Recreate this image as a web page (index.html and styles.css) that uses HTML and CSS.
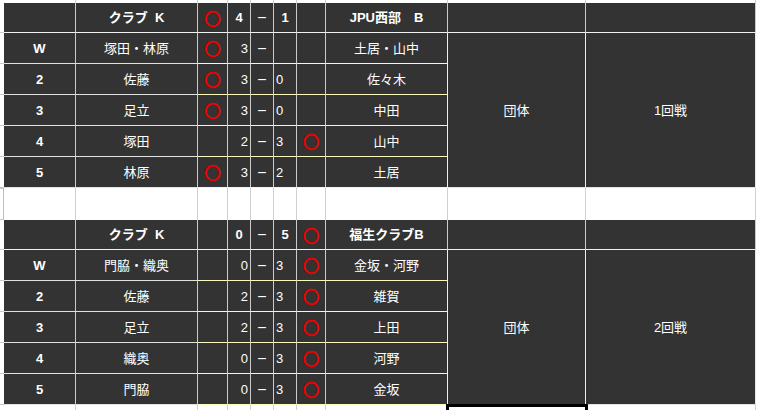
FILE: index.html
```html
<!DOCTYPE html>
<html lang="ja">
<head>
<meta charset="utf-8">
<title>試合結果</title>
<link rel="stylesheet" href="styles.css">
</head>
<body>
<div class="sheet">
  <!-- top strip -->
  <div class="edge nog"></div><div class="edge"></div><div class="edge"></div><div class="edge"></div><div class="edge"></div><div class="edge"></div><div class="edge"></div><div class="edge"></div><div class="edge"></div><div class="edge"></div><div class="edge"></div>

  <!-- match 1 header -->
  <div class="gut"></div>
  <div class="cell hb"></div>
  <div class="cell hb b">クラブ&nbsp; K</div>
  <div class="cell hb circ">○</div>
  <div class="cell hb b">4</div>
  <div class="cell hb dash">－</div>
  <div class="cell hb b">1</div>
  <div class="cell hb"></div>
  <div class="cell hb b">JPU西部　B</div>
  <div class="cell hb"></div>
  <div class="cell hb"></div>

  <!-- W -->
  <div class="gut"></div>
  <div class="cell b">W</div>
  <div class="cell">塚田・林原</div>
  <div class="cell y circ">○</div>
  <div class="cell y r">3</div>
  <div class="cell y dash">－</div>
  <div class="cell y l"></div>
  <div class="cell y"></div>
  <div class="cell y yr">土居・山中</div>
  <div class="cell yr merge">団体</div>
  <div class="cell last merge">1回戦</div>

  <div class="gut"></div>
  <div class="cell b">2</div>
  <div class="cell">佐藤</div>
  <div class="cell y circ">○</div>
  <div class="cell y r">3</div>
  <div class="cell y dash">－</div>
  <div class="cell y l">0</div>
  <div class="cell y"></div>
  <div class="cell y yr">佐々木</div>

  <div class="gut"></div>
  <div class="cell b">3</div>
  <div class="cell">足立</div>
  <div class="cell y circ">○</div>
  <div class="cell y r">3</div>
  <div class="cell y dash">－</div>
  <div class="cell y l">0</div>
  <div class="cell y"></div>
  <div class="cell y yr">中田</div>

  <div class="gut"></div>
  <div class="cell b">4</div>
  <div class="cell">塚田</div>
  <div class="cell y"></div>
  <div class="cell y r">2</div>
  <div class="cell y dash">－</div>
  <div class="cell y l">3</div>
  <div class="cell y circ">○</div>
  <div class="cell y yr">山中</div>

  <div class="gut"></div>
  <div class="cell b">5</div>
  <div class="cell">林原</div>
  <div class="cell y circ">○</div>
  <div class="cell y r">3</div>
  <div class="cell y dash">－</div>
  <div class="cell y l">2</div>
  <div class="cell y"></div>
  <div class="cell y yr">土居</div>

  <!-- spacer -->
  <div class="gut spacer-gut"></div>
  <div class="edge"></div><div class="edge"></div><div class="edge"></div><div class="edge"></div><div class="edge"></div><div class="edge"></div><div class="edge"></div><div class="edge"></div><div class="edge"></div><div class="edge"></div>

  <!-- match 2 header -->
  <div class="gut"></div>
  <div class="cell hb"></div>
  <div class="cell hb b">クラブ&nbsp; K</div>
  <div class="cell hb"></div>
  <div class="cell hb b">0</div>
  <div class="cell hb dash">－</div>
  <div class="cell hb b">5</div>
  <div class="cell hb circ">○</div>
  <div class="cell hb b">福生クラブB</div>
  <div class="cell hb"></div>
  <div class="cell hb"></div>

  <div class="gut"></div>
  <div class="cell b">W</div>
  <div class="cell">門脇・織奥</div>
  <div class="cell y"></div>
  <div class="cell y r">0</div>
  <div class="cell y dash">－</div>
  <div class="cell y l">3</div>
  <div class="cell y circ">○</div>
  <div class="cell y yr">金坂・河野</div>
  <div class="cell yr merge">団体</div>
  <div class="cell last merge">2回戦</div>

  <div class="gut"></div>
  <div class="cell b">2</div>
  <div class="cell">佐藤</div>
  <div class="cell y"></div>
  <div class="cell y r">2</div>
  <div class="cell y dash">－</div>
  <div class="cell y l">3</div>
  <div class="cell y circ">○</div>
  <div class="cell y yr">雑賀</div>

  <div class="gut"></div>
  <div class="cell b">3</div>
  <div class="cell">足立</div>
  <div class="cell y"></div>
  <div class="cell y r">2</div>
  <div class="cell y dash">－</div>
  <div class="cell y l">3</div>
  <div class="cell y circ">○</div>
  <div class="cell y yr">上田</div>

  <div class="gut"></div>
  <div class="cell b">4</div>
  <div class="cell">織奥</div>
  <div class="cell y"></div>
  <div class="cell y r">0</div>
  <div class="cell y dash">－</div>
  <div class="cell y l">3</div>
  <div class="cell y circ">○</div>
  <div class="cell y yr">河野</div>

  <div class="gut"></div>
  <div class="cell b">5</div>
  <div class="cell">門脇</div>
  <div class="cell y"></div>
  <div class="cell y r">0</div>
  <div class="cell y dash">－</div>
  <div class="cell y l">3</div>
  <div class="cell y circ">○</div>
  <div class="cell y yr">金坂</div>

  <!-- bottom strip -->
  <div class="edge nog"></div><div class="edge"></div><div class="edge"></div><div class="edge"></div><div class="edge"></div><div class="edge"></div><div class="edge"></div><div class="edge"></div><div class="edge"></div><div class="edge selected"><div class="cursor"></div></div><div class="edge"></div>
</div>
</body>
</html>
```

FILE: styles.css
```css
html, body {
  margin: 0;
  padding: 0;
  background: #ffffff;
}

body {
  font-family: "Liberation Sans", "Noto Sans CJK JP", sans-serif;
  font-size: 13px;
  overflow: hidden;
}

.sheet {
  display: grid;
  grid-template-columns: 4px 72px 122px 30px 23px 23px 23px 29px 122px 138px 170px;
  grid-template-rows: 3px 30px repeat(5, 31px) 32px 30px repeat(5, 31px) 5px;
}

.cell {
  box-sizing: border-box;
  display: flex;
  align-items: center;
  justify-content: center;
  background: #333333;
  color: #ffffff;
  border-right: 1px solid #cbcbcb;
  border-bottom: 1px solid #e2e2e2;
  white-space: nowrap;
  overflow: hidden;
  line-height: 1;
}

.hb { border-bottom-color: #f2f2f2; }
.y { border-bottom-color: #fbfbbf; }
.yr { border-right-color: #f5f5b5; }
.last { border-right-color: #e8e8e8; }

.b { font-weight: bold; }

.r {
  justify-content: flex-end;
  padding-right: 2px;
}

.l {
  justify-content: flex-start;
  padding-left: 2px;
}

.dash {
  font-family: "Noto Sans CJK JP", sans-serif;
  font-size: 11px;
  font-weight: bold;
}

.circ {
  color: #ee0000;
  font-family: "Noto Sans CJK JP", sans-serif;
  font-weight: bold;
  font-size: 16px;
  -webkit-text-stroke: 1px #ee0000;
}

.merge {
  grid-row: span 5;
}

.edge {
  box-sizing: border-box;
  background: #ffffff;
  border-right: 1px solid #d0d0d0;
}

.edge.nog { border-right: none; }

.gut {
  box-sizing: border-box;
  background: #ffffff;
  border-bottom: 1px solid #c8c8c8;
}

.spacer-gut {
  border-right: 1px solid #bdbdbd;
  border-top: 1px solid #c8c8c8;
}

.selected {
  position: relative;
}

.cursor {
  position: absolute;
  left: -2px;
  right: -3px;
  top: -1px;
  height: 10px;
  box-sizing: border-box;
  border: 3px solid #000000;
  border-bottom: none;
}
```
